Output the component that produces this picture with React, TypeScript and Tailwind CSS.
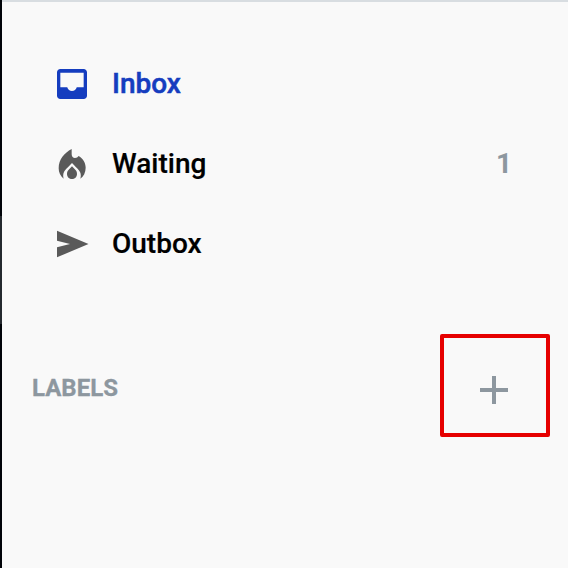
import type { ReactNode } from "react";

function InboxIcon() {
  return (
    <svg viewBox="0 0 24 24" className="size-10 shrink-0" fill="currentColor">
      <path d="M19 3H5C3.900 3 3 3.900 3 5v14c0 1.100.9 2 2 2h14c1.100 0 2-.9 2-2V5c0-1.100-.9-2-2-2zm0 11h-4.150c-.35 1.300-1.500 2.200-2.850 2.200S9.500 15.300 9.150 14H5V5.200H19V14z" />
    </svg>
  );
}

function FireIcon() {
  return (
    <svg viewBox="0 0 120 120" className="size-10 shrink-0" fill="currentColor">
      <path d="M59 15V31C59 38 63 42 69 42C74 42 77 40 80 36C93 43 101 57 101 71C101 85 95 97 85 104C87 98 87 90 84 84C82 79 77 75 60 57C43 75 38 79 36 84C33 90 33 98 35 104C25 97 20 85 20 73C20 45 37 27 59 15Z" />
      <path d="M60 67L70 77C74 81 75 85 75 90C75 99 68 105 60 105S45 99 45 90C45 85 46 81 50 77Z" />
    </svg>
  );
}

function SendIcon() {
  return (
    <svg viewBox="0 0 40 40" className="size-10 shrink-0" fill="currentColor">
      <path d="M5 6.700L36.500 20L5 33.300V23.200L18 20L5 16.800Z" />
    </svg>
  );
}

function NavItem({ icon, label, count, active }: { icon: ReactNode; label: string; count?: number; active?: boolean }) {
  return (
    <li className={active ? "flex h-20 items-center text-[#153dbf]" : "flex h-20 items-center text-[#5a5a5a]"}>
      {icon}
      <span className={active ? "ml-5 flex-1 [-webkit-text-stroke:0.5px_#153dbf]" : "ml-5 flex-1 text-black [-webkit-text-stroke:0.2px_black]"}>{label}</span>
      {count !== undefined && <span className="font-bold text-[#8d979f]">{count}</span>}
    </li>
  );
}

export default function App() {
  return (
    <div className="flex h-[568px] w-[568px] overflow-hidden bg-[#f9f9f9] font-['Roboto',sans-serif]">
      <div className="flex w-0.5 shrink-0 flex-col bg-[#010409]">
        <div className="mt-[216px] h-[108px] bg-[#24292e]" />
      </div>
      <aside className="flex-1 border-t-2 border-[#d8dde1]">
        <ul className="pt-[42px] pr-14 pl-[50px] text-[28px] leading-8 font-medium">
          <NavItem icon={<InboxIcon />} label="Inbox" active />
          <NavItem icon={<FireIcon />} label="Waiting" count={1} />
          <NavItem icon={<SendIcon />} label="Outbox" />
        </ul>
        <div className="mt-[50px] flex items-start justify-between pr-[18px] pl-[30px]">
          <h2 className="mt-[38px] text-2xl leading-8 font-bold text-[#8d979f] [-webkit-text-stroke:0.3px_#8d979f]">LABELS</h2>
          <button aria-label="Add label" className="flex h-[103px] w-[110px] items-center justify-center rounded-[2px] border-4 border-[#e60000] pt-2 pr-0.5 text-[#8d979f]">
            <svg viewBox="0 0 28 28" className="size-7" fill="currentColor">
              <path d="M12 0h4v12h12v4H16v12h-4V16H0v-4h12z" />
            </svg>
          </button>
        </div>
      </aside>
    </div>
  );
}
